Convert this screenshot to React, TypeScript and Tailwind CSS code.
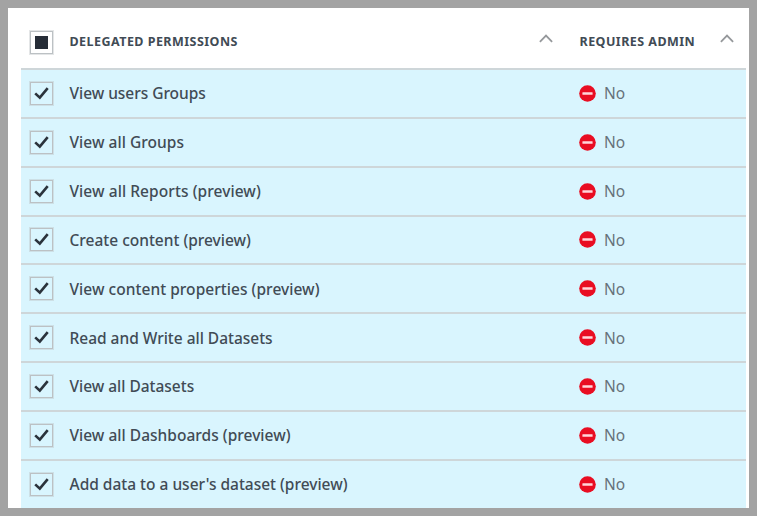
type Permission = { name: string; tracking: string };

const permissions: Permission[] = [
  { name: "View users Groups", tracking: "tracking-[-0.04px]" },
  { name: "View all Groups", tracking: "tracking-[0.04px]" },
  { name: "View all Reports (preview)", tracking: "tracking-[0.07px]" },
  { name: "Create content (preview)", tracking: "tracking-[-0.01px]" },
  { name: "View content properties (preview)", tracking: "tracking-[0.04px]" },
  { name: "Read and Write all Datasets", tracking: "tracking-[-0.02px]" },
  { name: "View all Datasets", tracking: "tracking-[-0.02px]" },
  { name: "View all Dashboards (preview)", tracking: "tracking-[0.02px]" },
  { name: "Add data to a user's dataset (preview)", tracking: "tracking-[-0.01px]" },
];

function Checkbox({ partial = false }: { partial?: boolean }) {
  return (
    <span className={`flex size-[23px] shrink-0 items-center justify-center border border-[#bcc1c4] outline outline-1 outline-[#bcc1c4]/40 ${partial ? "bg-white" : ""}`}>
      {partial ? (
        <span className="size-[13px] bg-[#262d37]" />
      ) : (
        <svg className="shrink-0" width="15" height="13" viewBox="0 0 15 13" fill="none" stroke="#2b333c" strokeWidth="2.6">
          <path d="M1.2 6.4 5.8 10.7 13.7 1.2" />
        </svg>
      )}
    </span>
  );
}

function SortArrow() {
  return (
    <svg width="14" height="9" viewBox="0 0 14 9" fill="none" stroke="#95989b" strokeWidth="1.8">
      <path d="M.9 7.8 7 1.6 13.1 7.8" />
    </svg>
  );
}

function NoEntry() {
  return (
    <svg width="17" height="17" viewBox="0 0 17 17">
      <circle cx="8.5" cy="8.5" r="8.3" fill="#e90d22" />
      <rect x="3.4" y="7.2" width="10.2" height="2.6" rx=".5" fill="#ffd5da" />
    </svg>
  );
}

export default function App() {
  return (
    <div className="flex h-[516px] w-[757px] flex-col overflow-hidden border-8 border-[#a3a3a3] bg-white pl-[13px] pr-[3px] font-['Noto_Sans','Open_Sans',sans-serif] text-[#414b55]">
      <header className="flex h-[60px] shrink-0 items-center pl-[9px] pt-[9px]">
        <Checkbox partial />
        <h2 className="ml-[16.5px] w-[469.5px] whitespace-nowrap text-[12.5px] font-bold tracking-[0.46px]">DELEGATED PERMISSIONS</h2>
        <span className="-mt-[9px]"><SortArrow /></span>
        <h2 className="ml-[26.5px] w-[140px] whitespace-nowrap text-[12.5px] font-bold tracking-[0.45px]">REQUIRES ADMIN</h2>
        <span className="-mt-[9px]"><SortArrow /></span>
      </header>
      <main>
        {permissions.map((p) => (
          <div key={p.name} className="flex h-[48.85px] items-center border-t-2 border-[#ced6d9] bg-[#d9f5fe] pl-[9px]">
            <Checkbox />
            <span className={`ml-[16.5px] w-[509.5px] whitespace-nowrap pt-px text-[15.5px] font-medium ${p.tracking}`}>{p.name}</span>
            <NoEntry />
            <span className="ml-2 pt-px text-[15.5px] text-[#66717a]">No</span>
          </div>
        ))}
      </main>
    </div>
  );
}
